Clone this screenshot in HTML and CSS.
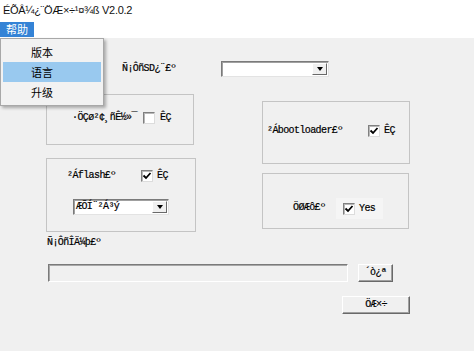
FILE: index.html
```html
<!DOCTYPE html>
<html>
<head>
<meta charset="utf-8">
<title>tool</title>
<link rel="stylesheet" href="styles.css">
</head>
<body>
<div class="window">
  <div class="titlebar">ÉÕÂ¼¿¨ÖÆ×÷¹¤¾ß V2.0.2</div>
  <div class="menubar"><span class="menu-item active">帮助</span></div>
  <div class="client">
    <div class="sd-row">
      <span class="lbl sd-lbl">Ñ¡ÔñSD¿¨£º</span>
      <div class="combo combo-sd"><span class="combo-text"></span><span class="combo-btn"><i class="tri"></i></span></div>
    </div>
    <div class="groups">
      <div class="col col-left">
        <div class="group g1">
          <div class="row"><span class="lbl l1">·ÖÇø²¢¸ñÊ½»¯</span><span class="chk"></span><span class="lbl cl">ÊÇ</span></div>
        </div>
        <div class="group g2">
          <div class="row"><span class="lbl l2">²Áflash£º</span><span class="chk on"><svg viewBox="0 0 10 10" width="10" height="10"><path d="M1.5 4.5 L4 7 L8.5 2" fill="none" stroke="#000" stroke-width="1.8"/></svg></span><span class="lbl cl2">ÊÇ</span></div>
          <div class="combo combo-erase"><span class="combo-text">ÆÕÍ¨²Á³ý</span><span class="combo-btn"><i class="tri"></i></span></div>
        </div>
      </div>
      <div class="col col-right">
        <div class="group g3">
          <div class="row"><span class="lbl l3">²Ábootloader£º</span><span class="chk on"><svg viewBox="0 0 10 10" width="10" height="10"><path d="M1.5 4.5 L4 7 L8.5 2" fill="none" stroke="#000" stroke-width="1.8"/></svg></span><span class="lbl cl3">ÊÇ</span></div>
        </div>
        <div class="group g4">
          <div class="row"><span class="lbl l4">ÖØÆô£º</span><span class="chkctl"><span class="chk on"><svg viewBox="0 0 10 10" width="10" height="10"><path d="M1.5 4.5 L4 7 L8.5 2" fill="none" stroke="#000" stroke-width="1.8"/></svg></span><span class="lbl cl4">Yes</span></span></div>
        </div>
      </div>
    </div>
    <div class="lbl file-label">Ñ¡ÔñÎÄ¼þ£º</div>
    <div class="file-row">
      <div class="input"></div>
      <button class="btn btn-open">´ò¿ª</button>
    </div>
    <div class="make-row">
      <button class="btn btn-make">ÖÆ×÷</button>
    </div>
  </div>
  <div class="popup">
    <div class="pitem">版本</div>
    <div class="pitem hot">语言</div>
    <div class="pitem">升级</div>
  </div>
</div>
</body>
</html>
```
FILE: styles.css
```css
html, body {
  margin: 0;
  padding: 0;
}
body {
  background: #f0f0f0;
  width: 474px;
  height: 351px;
  overflow: hidden;
  font-family: "Liberation Mono", monospace;
  font-size: 10px;
  letter-spacing: -0.6px;
  color: #000;
}
.window {
  position: relative;
  width: 474px;
  height: 351px;
}
.titlebar {
  height: 21px;
  background: #fff;
  font-family: "Liberation Sans", sans-serif;
  font-size: 11px;
  letter-spacing: -0.3px;
  line-height: 20px;
  padding-left: 3px;
  white-space: nowrap;
  color: #111;
}
.menubar {
  height: 17px;
  background: #fff;
  display: flex;
  letter-spacing: 0;
}
.menu-item {
  font-family: "Noto Sans CJK SC", sans-serif;
  font-size: 11px;
  line-height: 15px;
  height: 15px;
  margin-top: 1px;
  padding: 0 6px;
}
.menu-item.active {
  background: #3483d6;
  color: #fff;
}
.lbl {
  display: block;
  line-height: 12px;
  white-space: nowrap;
  -webkit-text-stroke: 0.2px #000;
}
.sd-row {
  display: flex;
  align-items: center;
  height: 16px;
  margin-top: 23px;
  padding-left: 122px;
}
.sd-lbl { width: 99px; }
.combo {
  box-sizing: border-box;
  display: flex;
  justify-content: space-between;
  align-items: stretch;
  background: #fff;
  border: 1px solid;
  border-color: #7a7a7a #e3e3e3 #e3e3e3 #7a7a7a;
  box-shadow: inset 1px 1px 0 #a0a0a0;
  padding: 1px 1px 1px 2px;
}
.combo-sd { width: 108px; height: 16px; }
.combo-text {
  line-height: 12px;
  white-space: nowrap;
  -webkit-text-stroke: 0.2px #000;
}
.combo-btn {
  box-sizing: border-box;
  width: 15px;
  background: #f0f0f0;
  border: 1px solid;
  border-color: #fff #696969 #696969 #fff;
  display: flex;
  align-items: center;
  justify-content: center;
}
.tri {
  width: 0;
  height: 0;
  border-left: 3.5px solid transparent;
  border-right: 3.5px solid transparent;
  border-top: 4px solid #000;
}
.groups {
  display: flex;
  align-items: flex-start;
  margin-top: 17px;
  padding-left: 46px;
}
.col { display: flex; flex-direction: column; }
.col-left { width: 150px; }
.col-right { margin-left: 66px; margin-top: 7px; }
.group {
  box-sizing: border-box;
  border: 1px solid #c4c4c4;
}
.g1 { width: 148px; height: 51px; padding: 17px 0 0 25px; }
.g2 { width: 150px; height: 74px; margin-top: 13px; padding: 11px 0 0 20px; }
.g3 { width: 148px; height: 63px; padding: 23px 0 0 4px; }
.g4 { width: 147px; height: 56px; margin-top: 9px; padding: 28px 0 0 30px; }
.row {
  display: flex;
  align-items: center;
  height: 12px;
}
.l1 { width: 71px; }
.l2 { width: 74px; }
.l3 { width: 101px; }
.l4 { width: 50px; }
.cl { margin-left: 5px; }
.cl2 { margin-left: 4px; }
.cl3 { margin-left: 4px; }
.cl4 { margin-left: 4px; }
.chk {
  box-sizing: border-box;
  width: 12px;
  height: 12px;
  flex: none;
  background: #fff;
  border: 1px solid;
  border-color: #808080 #dcdcdc #dcdcdc #808080;
  box-shadow: inset 1px 1px 0 #b8b8b8;
  display: flex;
  align-items: center;
  justify-content: center;
}
.chk svg { display: block; }
.chkctl {
  display: flex;
  align-items: center;
  background: #f5f5f5;
  margin-left: -7px;
  padding: 5px 8px 4px 7px;
}
.combo-erase {
  width: 96px;
  height: 16px;
  margin-top: 17px;
  margin-left: 6px;
}
.file-label {
  margin-top: 5px;
  padding-left: 47px;
}
.file-row {
  display: flex;
  margin-top: 15px;
  padding-left: 48px;
}
.input {
  box-sizing: border-box;
  width: 300px;
  height: 18px;
  background: #f0f0f0;
  border: 1px solid;
  border-color: #7a7a7a #fff #fff #7a7a7a;
  box-shadow: inset 1px 1px 0 #a8a8a8;
}
.btn {
  box-sizing: border-box;
  height: 18px;
  margin: 0;
  padding: 0;
  background: #f0f0f0;
  border: 1px solid;
  border-color: #fff #696969 #696969 #fff;
  box-shadow: inset -1px -1px 0 #a0a0a0;
  font-family: "Liberation Mono", monospace;
  font-size: 10px;
  letter-spacing: -0.6px;
  -webkit-text-stroke: 0.2px #000;
  color: #000;
  line-height: 14px;
  text-align: center;
}
.btn-open { width: 35px; margin-left: 10px; }
.make-row {
  display: flex;
  margin-top: 14px;
  padding-left: 342px;
}
.btn-make { width: 68px; }
.popup {
  position: absolute;
  left: 0;
  top: 38px;
  width: 104px;
  height: 68px;
  box-sizing: border-box;
  background: #f2f2f2;
  border: 1px solid #a8a8a8;
  box-shadow: 2px 2px 3px rgba(0, 0, 0, 0.3);
  padding: 3px 2px;
  letter-spacing: 0;
}
.pitem {
  height: 20px;
  line-height: 20px;
  padding-left: 28px;
  font-family: "Noto Sans CJK SC", sans-serif;
  font-size: 11px;
}
.pitem.hot { background: #99c9ef; }
```
